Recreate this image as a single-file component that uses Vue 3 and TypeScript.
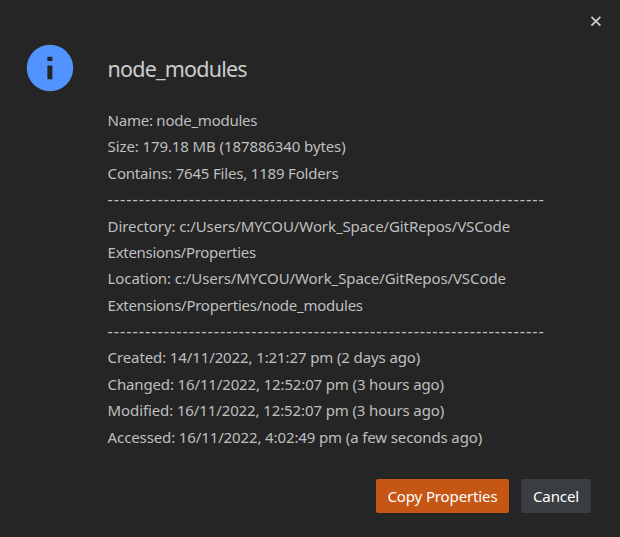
<script setup lang="ts">
import type { Directive } from 'vue'

interface Line {
  text: string
  width: number
  rule?: boolean
}

const rule = '-'.repeat(70)

const lines: Line[] = [
  { text: 'Name: node_modules', width: 149.7 },
  { text: 'Size: 179.18 MB (187886340 bytes)', width: 238 },
  { text: 'Contains: 7645 Files, 1189 Folders', width: 231 },
  { text: rule, width: 437.2, rule: true },
  { text: 'Directory: c:/Users/MYCOU/Work_Space/GitRepos/VSCode', width: 402.5 },
  { text: 'Extensions/Properties', width: 148.2 },
  { text: 'Location: c:/Users/MYCOU/Work_Space/GitRepos/VSCode', width: 398.3 },
  { text: 'Extensions/Properties/node_modules', width: 255.2 },
  { text: rule, width: 437.2, rule: true },
  { text: 'Created: 14/11/2022, 1:21:27 pm (2 days ago)', width: 312.6 },
  { text: 'Changed: 16/11/2022, 12:52:07 pm (3 hours ago)', width: 336.2 },
  { text: 'Modified: 16/11/2022, 12:52:07 pm (3 hours ago)', width: 336.5 },
  { text: 'Accessed: 16/11/2022, 4:02:49 pm (a few seconds ago)', width: 374.5 },
]

// Adjusts tracking so that the text takes up the given width.
const vFit: Directive<HTMLElement, number> = {
  mounted(el, { value }) {
    const count = (el.textContent ?? '').length
    const natural = el.getBoundingClientRect().width
    el.style.letterSpacing = `${(value - natural) / count}px`
  },
}
</script>

<template>
  <main class="dialog" role="dialog" aria-labelledby="title">
    <header class="toolbar">
      <button class="close" aria-label="Close">
        <svg width="12" height="12" viewBox="0 0 12 12">
          <path d="M1.4 1.9 10.4 10.7M10.4 1.9 1.4 10.7" />
        </svg>
      </button>
    </header>
    <section class="body">
      <svg class="info" width="48" height="48" viewBox="0 0 48 48">
        <circle cx="24" cy="24" r="23.2" fill="#5294ff" />
        <path d="M21.4 12.7h5v4.4h-5zM21.4 21.4h5v13.8h-5z" fill="#252526" />
      </svg>
      <div class="content">
        <h1 id="title"><span v-fit="139.2">node_modules</span></h1>
        <div class="details">
          <p v-for="(line, i) in lines" :key="i" :class="{ rule: line.rule }">
            <span v-fit="line.width">{{ line.text }}</span>
          </p>
        </div>
      </div>
    </section>
    <footer class="actions">
      <button class="button primary"><span v-fit="110">Copy Properties</span></button>
      <button class="button secondary"><span v-fit="46">Cancel</span></button>
    </footer>
  </main>
</template>

<style>
body {
  background: #252526;
}
</style>

<style scoped>
.dialog {
  box-sizing: border-box;
  width: 620px;
  height: 537px;
  display: flex;
  flex-direction: column;
  background: #252526;
  color: #bfbfbf;
  font-family: 'Noto Sans', 'Open Sans', sans-serif;
  font-size: 15px;
}
.toolbar {
  display: flex;
  justify-content: flex-end;
  height: 44px;
  padding: 15px 18px 0 0;
  box-sizing: border-box;
}
button {
  border: 0;
  margin: 0;
  font: inherit;
}
.close {
  width: 12px;
  height: 12px;
  padding: 0;
  background: none;
}
.close svg {
  display: block;
  fill: none;
  stroke: #cccccc;
  stroke-width: 1.8;
}
.body {
  display: flex;
  gap: 33.6px;
  padding-left: 26px;
}
.info {
  flex: none;
}
.content {
  flex: 1;
}
span {
  display: inline-block;
  white-space: pre;
}
h1 {
  margin: 0;
  height: 62.95px;
  line-height: 50px;
  font-size: 21.5px;
  font-weight: 400;
  color: #cccccc;
}
p {
  margin: 0;
  height: 26.4px;
  line-height: 26.4px;
}
.rule {
  font-size: 16.5px;
}
.actions {
  display: flex;
  justify-content: flex-end;
  gap: 12px;
  margin-top: 28.85px;
  padding-right: 29px;
}
.button {
  display: flex;
  align-items: center;
  justify-content: center;
  height: 34px;
  padding: 0;
  border-radius: 2px;
  color: #ffffff;
}
.primary {
  width: 133px;
  background: #c65614;
}
.secondary {
  width: 70px;
  background: #3a3d41;
}
</style>
